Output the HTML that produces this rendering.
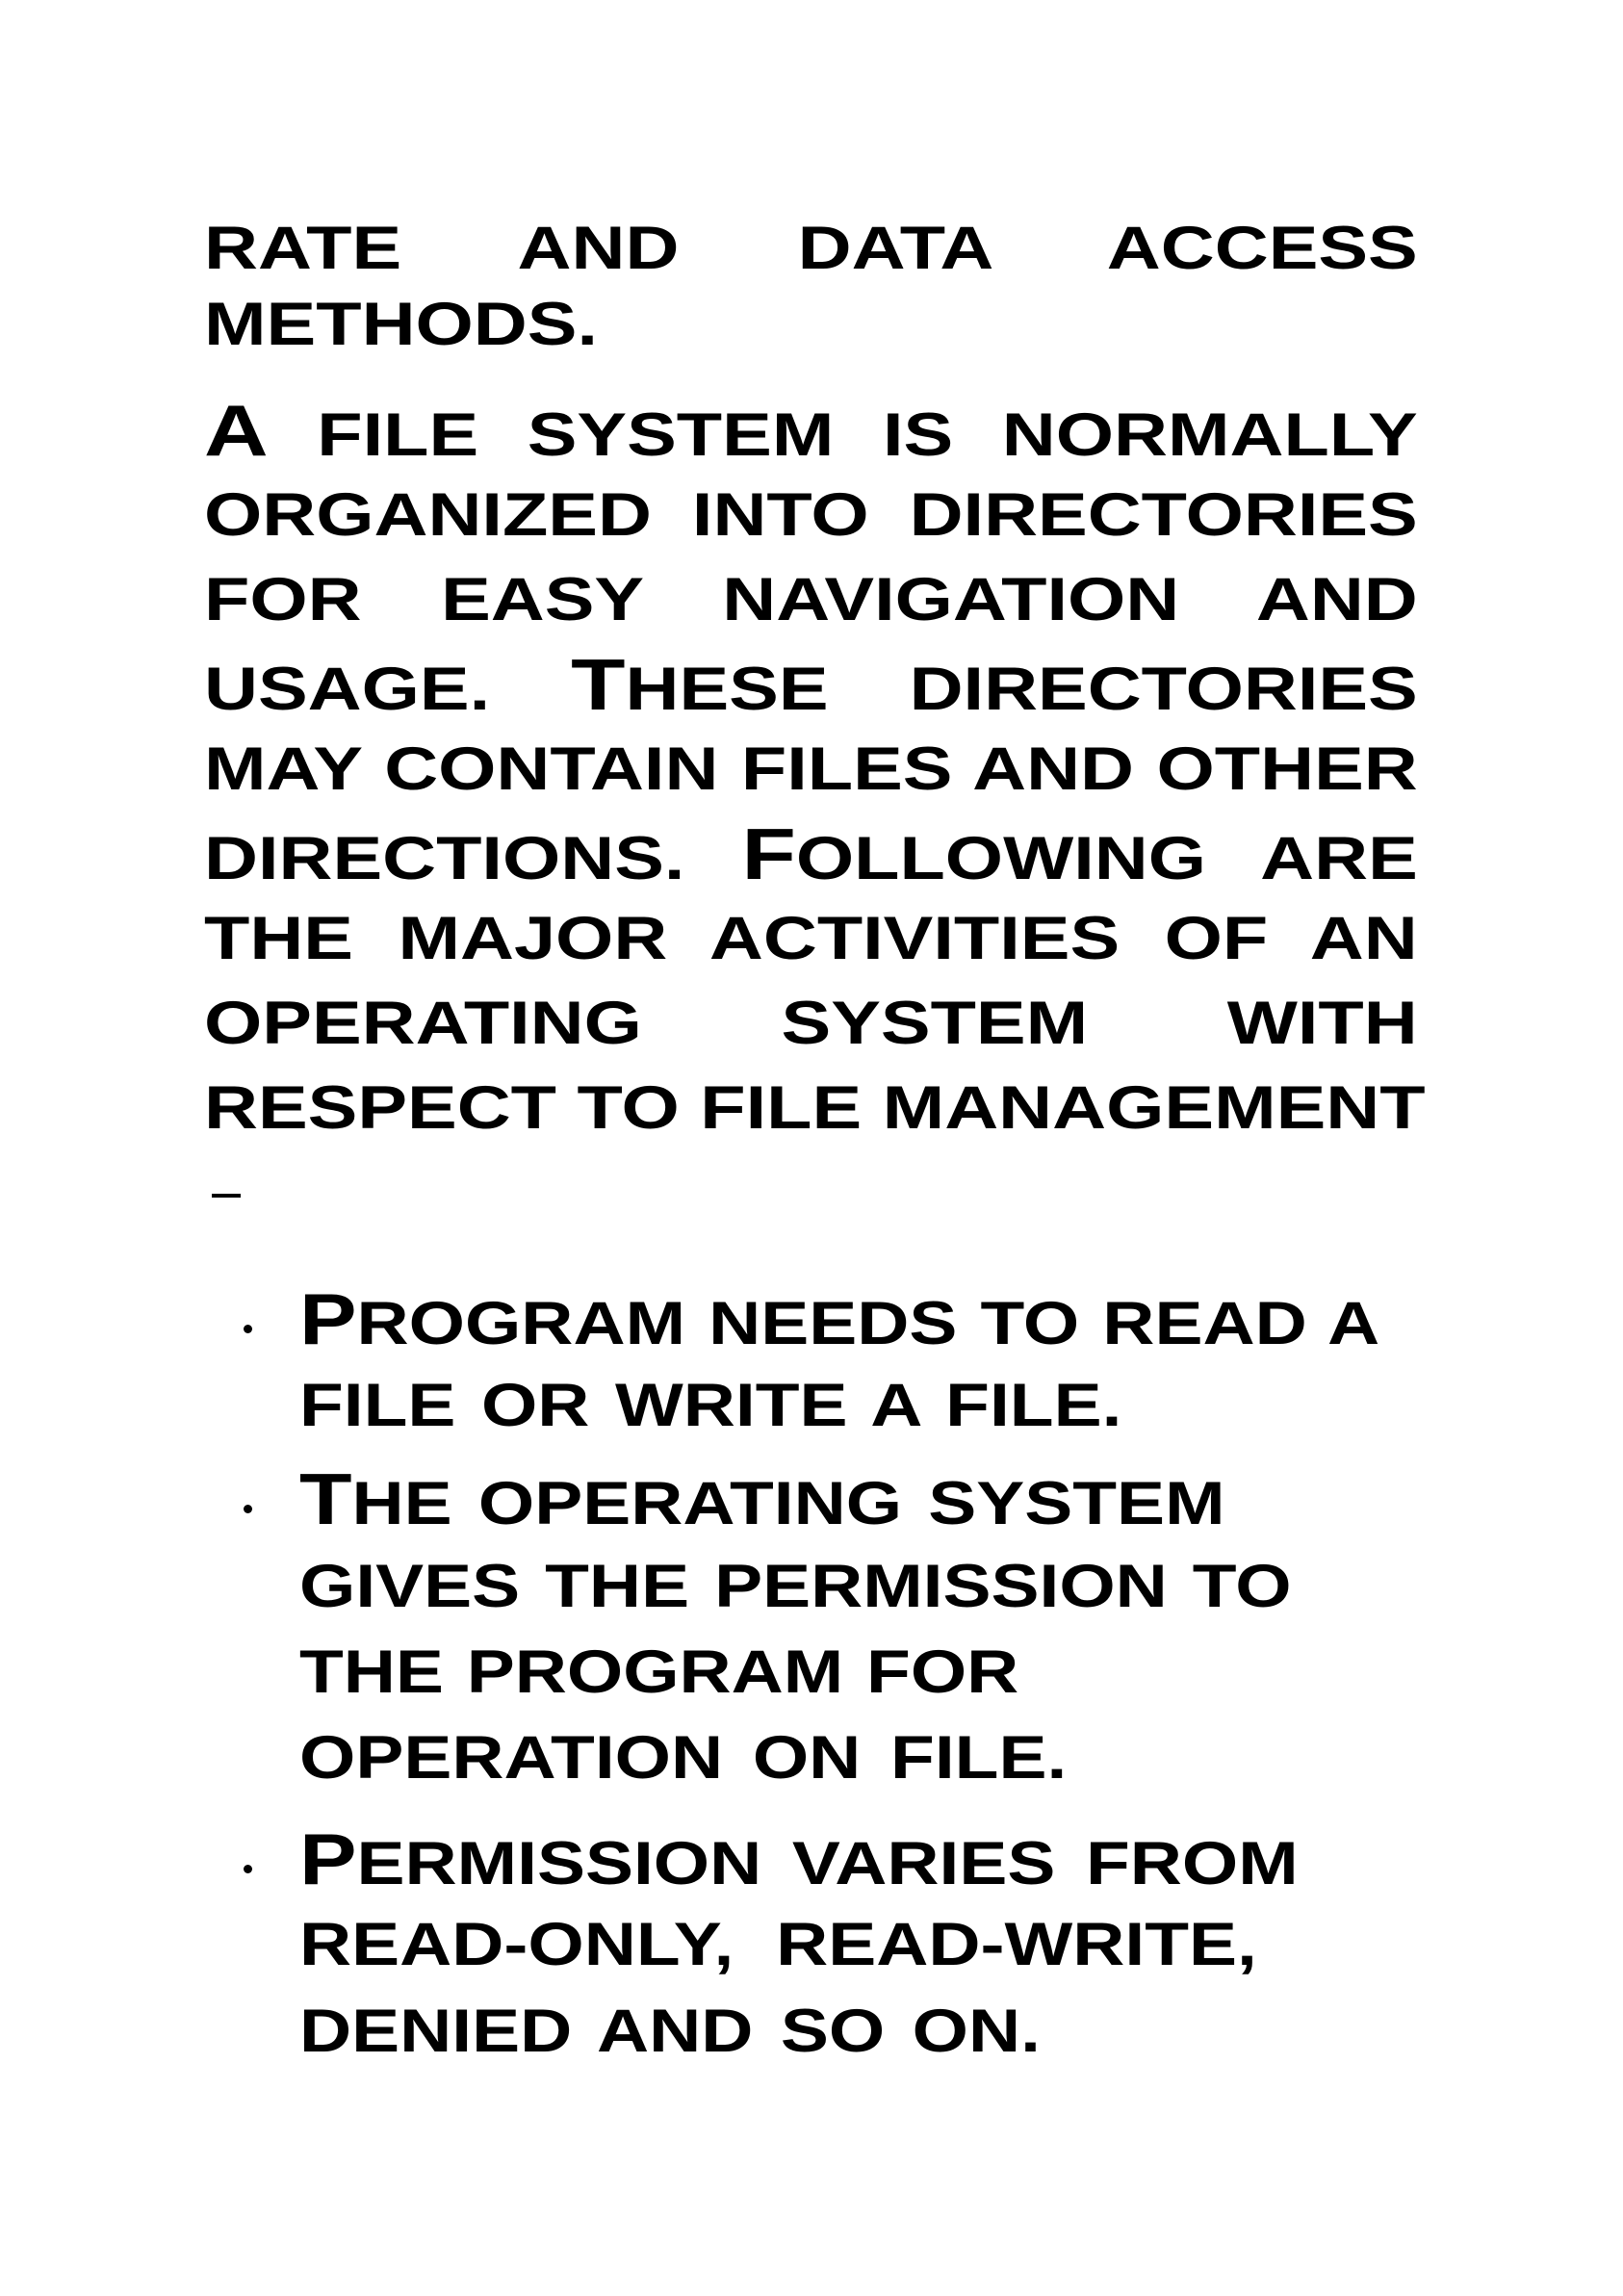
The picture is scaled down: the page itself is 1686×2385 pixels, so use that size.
<!DOCTYPE html>
<html><head><meta charset="utf-8"><style>
html,body{margin:0;padding:0;background:#fff}
body{width:1686px;height:2385px;position:relative;overflow:hidden;font-family:"Liberation Sans",sans-serif;font-weight:bold;color:#000}
.l{position:absolute;font-size:63px;line-height:72px;height:72px;white-space:nowrap;text-align:justify;text-align-last:justify;letter-spacing:0px;transform:scaleX(1.23);transform-origin:0 0}
.l b{font-size:75px}
.m{left:212px;width:1025px}
.left{text-align:left;text-align-last:left}
.b{left:311px;transform:scaleX(1.19)}
.dot{position:absolute;width:9px;height:9px;border-radius:50%;background:#000;left:253px}
</style></head><body>
<div class="l m" style="top:222px">RATE AND DATA ACCESS</div>
<div class="l m left" style="top:301px">METHODS.</div>
<div class="l m" style="top:411px"><b>A</b> FILE SYSTEM IS NORMALLY</div>
<div class="l m" style="top:499px">ORGANIZED INTO DIRECTORIES</div>
<div class="l m" style="top:587px">FOR EASY NAVIGATION AND</div>
<div class="l m" style="top:675px">USAGE. <b>T</b>HESE DIRECTORIES</div>
<div class="l m" style="top:763px">MAY CONTAIN FILES AND OTHER</div>
<div class="l m" style="top:851px">DIRECTIONS. <b>F</b>OLLOWING ARE</div>
<div class="l m" style="top:939px">THE MAJOR ACTIVITIES OF AN</div>
<div class="l m" style="top:1027px">OPERATING SYSTEM WITH</div>
<div class="l m" style="top:1115px">RESPECT TO FILE MANAGEMENT</div>
<div style="position:absolute;left:220px;top:1240px;width:30px;height:4px;background:#000"></div>

<div class="dot" style="top:1376px"></div>
<div class="l b" style="top:1334px;width:943px"><b>P</b>ROGRAM NEEDS TO READ A</div>
<div class="l b" style="top:1424px;width:718px">FILE OR WRITE A FILE.</div>
<div class="dot" style="top:1563px"></div>
<div class="l b" style="top:1521px;width:808px"><b>T</b>HE OPERATING SYSTEM</div>
<div class="l b" style="top:1612px;width:866px">GIVES THE PERMISSION TO</div>
<div class="l b" style="top:1701px;width:628px">THE PROGRAM FOR</div>
<div class="l b" style="top:1790px;width:670px">OPERATION ON FILE.</div>
<div class="dot" style="top:1937px"></div>
<div class="l b" style="top:1895px;width:872px"><b>P</b>ERMISSION VARIES FROM</div>
<div class="l b" style="top:1984px;width:836px">READ-ONLY, READ-WRITE,</div>
<div class="l b" style="top:2074px;width:647px">DENIED AND SO ON.</div>
</body></html>
